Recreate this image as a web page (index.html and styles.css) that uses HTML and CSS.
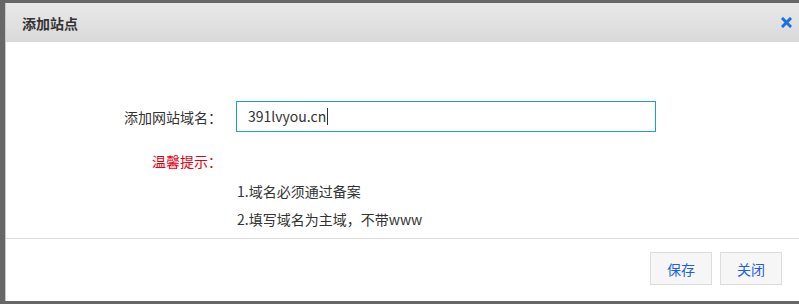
FILE: index.html
```html
<!DOCTYPE html>
<html lang="zh-CN">
<head>
    <meta charset="UTF-8">
    <title>添加站点</title>
    <link rel="stylesheet" href="styles.css">
</head>
<body>
    <div class="dialog">
        <div class="dialog-header">
            <span class="dialog-title">添加站点</span>
            <span class="dialog-close">
                <svg width="11" height="11" viewBox="0 0 11 11"><path d="M2 2 L9 9 M9 2 L2 9" stroke="#1a6fe6" stroke-width="3" stroke-linecap="square"/></svg>
            </span>
        </div>
        <div class="dialog-body">
            <div class="form-row">
                <label class="form-label">添加网站域名：</label>
                <div class="input-box">391lvyou.cn<span class="caret"></span></div>
            </div>
            <div class="form-row tips-row">
                <span class="form-label tips-label">温馨提示：</span>
            </div>
            <div class="tips">
                <p>1.域名必须通过备案</p>
                <p>2.填写域名为主域，不带www</p>
            </div>
        </div>
        <div class="dialog-footer">
            <button class="btn">保存</button>
            <button class="btn">关闭</button>
        </div>
    </div>
</body>
</html>
```

FILE: styles.css
```css
* {
    margin: 0;
    padding: 0;
    box-sizing: border-box;
}

body {
    font-family: "Microsoft YaHei", "Noto Sans CJK SC", "Noto Sans", sans-serif;
    background-color: #676767;
    width: 799px;
    height: 304px;
    overflow: hidden;
    color: #333;
    font-size: 14px;
}

.dialog {
    margin: 3px 0 0 5px;
    width: 800px;
    height: 298px;
    background-color: #fff;
    border-left: 1px solid #c8c8c8;
    display: flex;
    flex-direction: column;
}

.dialog-header {
    height: 39px;
    background: linear-gradient(#e9e9e9, #d9d9d9);
    display: flex;
    align-items: center;
    justify-content: space-between;
    padding: 0 13px 0 16px;
}

.dialog-title {
    font-size: 14px;
    font-weight: bold;
    color: #333;
}

.dialog-close {
    display: flex;
    cursor: pointer;
}

.dialog-body {
    height: 197px;
    padding-top: 59px;
    border-bottom: 1px solid #dcdcdc;
}

.form-row {
    display: flex;
    align-items: center;
}

.form-label {
    width: 216px;
    text-align: right;
    margin-right: 14px;
    color: #333;
}

.input-box {
    width: 420px;
    height: 31px;
    border: 1px solid #1e9ae0;
    padding-left: 11px;
    line-height: 29px;
    color: #333;
    display: flex;
    align-items: center;
}

.caret {
    display: inline-block;
    width: 1px;
    height: 17px;
    background-color: #333;
    margin-left: 1px;
}

.tips-row {
    margin-top: 19px;
}

.tips-label {
    color: #e60012;
}

.tips {
    margin-left: 231px;
    margin-top: 6px;
}

.tips p {
    line-height: 28px;
}

.dialog-footer {
    flex: 1;
    display: flex;
    justify-content: flex-end;
    align-items: flex-start;
    gap: 8px;
    padding: 13px 23px 0 0;
}

.btn {
    width: 62px;
    height: 33px;
    background-color: #f6f6f6;
    border: 1px solid #dcdcdc;
    color: #1a5fe6;
    font-family: inherit;
    font-size: 14px;
    cursor: pointer;
}
```
